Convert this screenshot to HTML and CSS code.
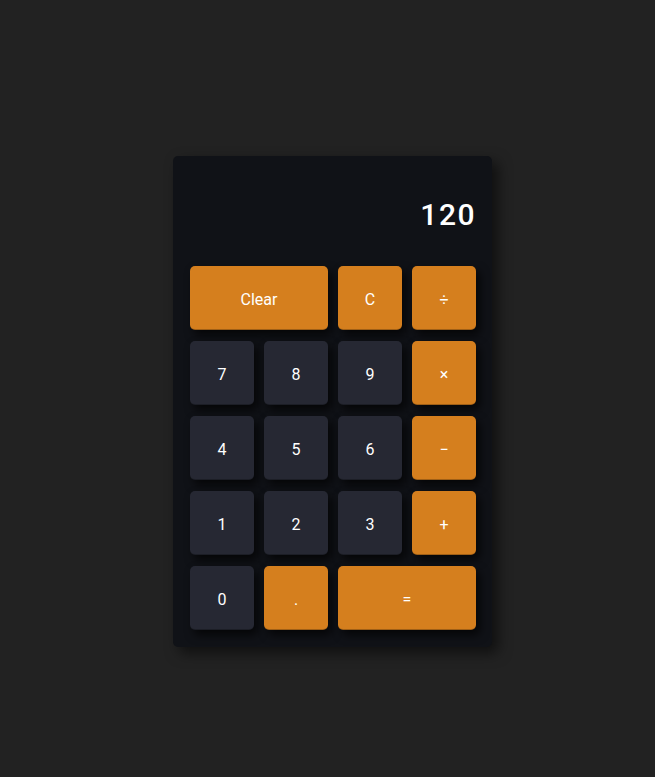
FILE: index.html
```
<!DOCTYPE html>
<html>
<head>
<meta charset="utf-8">
<link rel="stylesheet" href="styles.css">
</head>
<body>
<div class="calc">
  <div class="display">120</div>
  <div class="keys">
    <button class="key op wide">Clear</button>
    <button class="key op">C</button>
    <button class="key op">÷</button>
    <button class="key">7</button>
    <button class="key">8</button>
    <button class="key">9</button>
    <button class="key op">×</button>
    <button class="key">4</button>
    <button class="key">5</button>
    <button class="key">6</button>
    <button class="key op">−</button>
    <button class="key">1</button>
    <button class="key">2</button>
    <button class="key">3</button>
    <button class="key op">+</button>
    <button class="key">0</button>
    <button class="key op">.</button>
    <button class="key op wide">=</button>
  </div>
</div>
</body>
</html>
```
FILE: styles.css
```
html, body {
  margin: 0;
  padding: 0;
  background: #222222;
  height: 100%;
}
body {
  padding-top: 156px;
  box-sizing: border-box;
  font-family: Roboto, "Liberation Sans", sans-serif;
}
.calc {
  margin-left: 173px;
  width: 319px;
  height: 491px;
  box-sizing: border-box;
  background: #101217;
  border-radius: 5px;
  padding: 0 16px 16px 17px;
  box-shadow: 6px 6px 14px rgba(0,0,0,0.55);
}
.display {
  height: 110px;
  display: flex;
  align-items: center;
  justify-content: flex-end;
  padding-top: 6px;
  box-sizing: border-box;
  color: #ffffff;
  font-size: 30px;
  font-weight: 500;
  letter-spacing: 1.5px;
}
.keys {
  display: grid;
  grid-template-columns: repeat(4, 64px);
  grid-auto-rows: 64px;
  column-gap: 10px;
  row-gap: 11px;
}
.key {
  border: none;
  border-radius: 5px;
  background: #262833;
  color: #ffffff;
  font-family: Roboto, "Liberation Sans", sans-serif;
  font-size: 16px;
  padding: 3px 0 0 0;
  box-shadow: 4px 5px 10px rgba(0,0,0,0.7);
  border-bottom: 1px solid rgba(0,0,0,0.25);
}
.key.op {
  background: #d57f1e;
}
.key.wide {
  grid-column: span 2;
}
```
